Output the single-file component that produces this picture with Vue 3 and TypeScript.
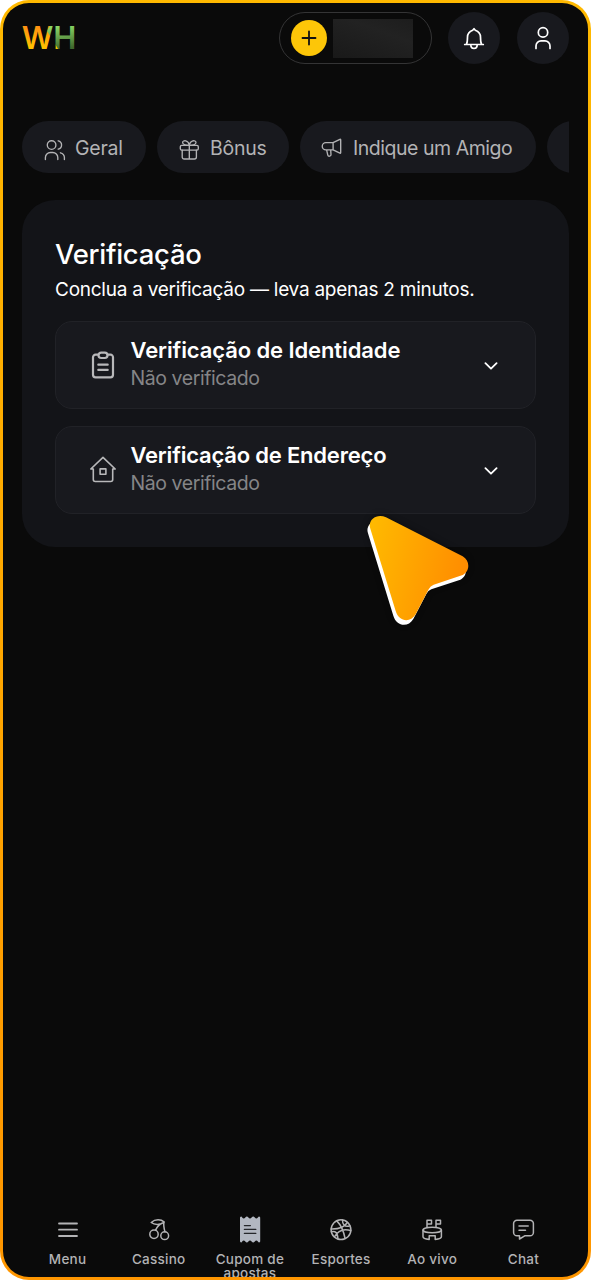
<script setup lang="ts">
interface Chip { id: string; label: string }
interface Check { id: string; title: string; status: string }
interface NavItem { id: string; label: string }

const chips: Chip[] = [
  { id: 'geral', label: 'Geral' },
  { id: 'bonus', label: 'Bônus' },
  { id: 'indique', label: 'Indique um Amigo' },
]
const checks: Check[] = [
  { id: 'identidade', title: 'Verificação de Identidade', status: 'Não verificado' },
  { id: 'endereco', title: 'Verificação de Endereço', status: 'Não verificado' },
]
const nav: NavItem[] = [
  { id: 'menu', label: 'Menu' },
  { id: 'cassino', label: 'Cassino' },
  { id: 'cupom', label: 'Cupom de apostas' },
  { id: 'esportes', label: 'Esportes' },
  { id: 'aovivo', label: 'Ao vivo' },
  { id: 'chat', label: 'Chat' },
]
</script>

<template>
  <div class="frame">
    <div class="screen">
      <header class="header">
        <svg class="logo" width="60" height="44" viewBox="0 0 60 44">
          <defs>
            <linearGradient id="gold" x1="0" y1="0" x2="0" y2="1">
              <stop offset="0.25" stop-color="#ff9212" />
              <stop offset="0.7" stop-color="#ffc000" />
            </linearGradient>
            <linearGradient id="leaf" x1="0" y1="0" x2="0.2" y2="1">
              <stop offset="0.35" stop-color="#8ad765" />
              <stop offset="0.85" stop-color="#3f682e" />
            </linearGradient>
            <pattern id="brand" patternUnits="userSpaceOnUse" width="60" height="44">
              <rect width="60" height="44" fill="url(#leaf)" />
              <path d="M0 0H34L25 15L43 44H0Z" fill="url(#gold)" />
            </pattern>
          </defs>
          <text y="33" class="logo-text" fill="url(#brand)"><tspan x="-0.3">W</tspan><tspan x="31.2">H</tspan></text>
        </svg>
        <div class="actions">
          <div class="balance">
            <span class="plus">
              <svg width="16" height="16" viewBox="0 0 16 16"><path d="M8 1.5v13M1.5 8h13" /></svg>
            </span>
            <span class="hidden-amount"></span>
          </div>
          <button class="round" type="button" aria-label="Notificações">
            <svg width="24" height="26" viewBox="0 0 24 26">
              <path d="M2.7 19.5h18.6M4.5 19.2c.9-1.8 1-3.300 1-7.200 0-3.800 2.400-5.700 5.200-6.800L12 3.700l1.300 1.500c2.800 1.100 5.200 3 5.200 6.800 0 3.900.1 5.400 1 7.200M8.800 19.700c0 4.900 6.400 4.900 6.400 0" />
            </svg>
          </button>
          <button class="round" type="button" aria-label="Perfil">
            <svg width="24" height="26" viewBox="0 0 24 26">
              <circle cx="12" cy="7.400" r="4.700" />
              <path d="M5 23.500v-2.600a5 5 0 0 1 5-5h4a5 5 0 0 1 5 5v2.600" />
            </svg>
          </button>
        </div>
      </header>

      <nav class="chips">
        <button v-for="chip in chips" :key="chip.id" type="button" class="chip" :class="chip.id">
          <svg width="22" height="22" viewBox="0 0 22 22">
            <template v-if="chip.id === 'geral'">
              <circle cx="7.6" cy="6" r="4.3" />
              <path d="M1.400 20.500v-2a5 5 0 0 1 5-5h2.400a5 5 0 0 1 5 5v2M14.200 1.800a4.300 4.300 0 0 1 0 8.400M16.400 13.800c2.600.7 4 2.300 4 4.800v1.900" />
            </template>
            <template v-else-if="chip.id === 'bonus'">
              <rect x="1.300" y="6.300" width="18" height="4.800" rx="1.400" />
              <path d="M3.200 11.100v6.900a2 2 0 0 0 2 2h10.200a2 2 0 0 0 2-2v-6.900M10.300 6.300V20M10.300 6.300C7.500 6.500 3.400 5.800 3.600 3.400 3.900.8 9.600.9 10.300 6.300M10.300 6.300c2.800.2 6.900-.5 6.700-2.900-.3-2.600-6-2.500-6.700 2.900" />
            </template>
            <template v-else>
              <path d="M12.100 4.600H4.900a3.600 3.600 0 0 0 0 7.300h7.200ZM12.100 4.600l6.800-3.300q.8-.3.800.6v12.700q0 .9-.8.600l-6.800-3.300M5.600 11.900l1.200 5.200c.4 1.700 3.400 1.400 3.200-.5l-.3-4.700" />
            </template>
          </svg>
          <span>{{ chip.label }}</span>
        </button>
        <span class="chip next"></span>
      </nav>

      <main class="card">
        <h1>Verificação</h1>
        <p class="lead">Conclua a verificação — leva apenas 2 minutos.</p>
        <section v-for="check in checks" :key="check.id" class="check" :class="check.id">
          <svg class="check-icon" width="28" height="30" viewBox="0 0 28 30">
            <template v-if="check.id === 'identidade'">
              <path stroke-width="2.200" d="M9.300 4.700H6.500a2.500 2.500 0 0 0-2.500 2.500v17.600a2.500 2.500 0 0 0 2.500 2.500h15a2.500 2.500 0 0 0 2.500-2.500V7.200a2.500 2.500 0 0 0-2.500-2.500h-2.800M9.300 14.700h9.400M9.300 19.900h9.400" />
              <rect x="9.500" y="2.600" width="9" height="5.400" rx="2.700" stroke-width="2.200" />
            </template>
            <template v-else>
              <path stroke-width="1.600" d="M4.300 14H1.800L14 2.300 26.200 14h-2.500v10.500a2 2 0 0 1-2 2H6.300a2 2 0 0 1-2-2Z" />
              <rect x="11.100" y="13.900" width="5.800" height="5.400" stroke-width="1.600" />
            </template>
          </svg>
          <div class="check-copy">
            <h2>{{ check.title }}</h2>
            <p>{{ check.status }}</p>
          </div>
          <svg class="chevron" width="16" height="10" viewBox="0 0 16 10"><path d="M2.400 2.200l5.600 5.500 5.600-5.500" /></svg>
        </section>
      </main>

      <footer class="tabbar">
        <a v-for="item in nav" :key="item.id" class="tab" :class="item.id">
          <svg width="26" height="28" viewBox="0 0 26 28">
            <path v-if="item.id === 'menu'" d="M4 7.500h18M4 13.700h18M4 20h18" stroke-width="1.800" />
            <template v-else-if="item.id === 'cassino'">
              <circle cx="8" cy="18.200" r="4.200" />
              <circle cx="18.700" cy="19.700" r="3.900" />
              <path d="M5.200 6.500C9.400 2.800 15 3.200 18.300 6.100 14.500 9.200 8.500 9.200 5.200 6.500ZM18 6.200c-3.800 1.500-7 4.500-8.300 7.700M18 6.200c-.8 3.500.2 7 1 9.700" />
            </template>
            <template v-else-if="item.id === 'cupom'">
              <path class="solid" d="M3 1.500q1.200-2 2.200 0q1.500 2.200 3.100 0q1.600-2 3.100 0q1.600 2.200 3.200 0q1.600-2 3.200 0q1.500 2.200 3.100 0q1.200-2 2.300 0v24q-1.100 2-2.300 0q-1.600-2.200-3.100 0q-1.600 2-3.200 0q-1.600-2.200-3.200 0q-1.500 2-3.100 0q-1.600-2.200-3.100 0q-1 2-2.200 0Z" />
              <path class="ink" d="M7.400 9.600h6M7.400 13.400h11.400M7.400 17.400h11.400" />
            </template>
            <template v-else-if="item.id === 'esportes'">
              <circle cx="13" cy="13.700" r="9.900" />
              <path d="M8.800 4.900c4.400 4.400 6.900 10.500 8.300 17.600M3.200 13c8 .2 13.300-2 16.200-6.500M6.400 20.900c3.300-6 9.300-8.500 16.400-6.400M14.500 4c-.2 4 2.300 7.700 7.300 5.700M3.400 15.700c4.100-.8 6.300.8 6.500 7.300" />
            </template>
            <template v-else-if="item.id === 'aovivo'">
              <ellipse cx="13.200" cy="14" rx="9.200" ry="2.800" />
              <path d="M4 14v6.800q0 2 6.200 2.700v-3.800h6v3.800q6.200-.7 6.200-2.700V14M8 11.300V4.300h4.500v3.600H8M17 11.300V4.300h4.500v3.600H17" />
            </template>
            <template v-else>
              <path d="M7 4.200h13a3.400 3.400 0 0 1 3.400 3.400v8.800a3.400 3.400 0 0 1-3.400 3.400h-5.300L9.500 23v-3.200H7a3.400 3.400 0 0 1-3.400-3.400V7.600A3.400 3.400 0 0 1 7 4.200ZM9 10h9.200M9 14.200h6.500" />
            </template>
          </svg>
          <span>{{ item.label }}</span>
        </a>
      </footer>

      <svg class="cursor" width="110" height="117" viewBox="69 216 330 351" aria-hidden="true">
        <defs>
          <linearGradient id="pointer" x1="0" y1="0.2" x2="1" y2="0.45">
            <stop offset="0" stop-color="#ffb900" />
            <stop offset="1" stop-color="#ff8c00" />
          </linearGradient>
        </defs>
        <path transform="translate(-7 14)" fill="#fff" d="M91 266C82 240 110 219 138 232L368 349C392 363 389 395 368 405L281 434Q271 438 266 448L227 523C211 550 176 545 167 513Z" />
        <path fill="url(#pointer)" d="M91 266C82 240 110 219 138 232L368 349C392 363 389 395 368 405L281 434Q271 438 266 448L227 523C211 550 176 545 167 513Z" />
      </svg>
    </div>
  </div>
</template>

<style>
body { background: #fff; }
</style>

<style scoped>
* { box-sizing: border-box; }
.frame {
  width: 591px;
  height: 1280px;
  padding: 3px;
  border-radius: 29px;
  background: linear-gradient(#ffb900, #ff9600);
  font-family: Inter, "Noto Sans", sans-serif;
}
.screen {
  position: relative;
  display: flex;
  flex-direction: column;
  height: 1274px;
  padding: 9px 19px 0;
  border-radius: 26px;
  background: #0a0a0a;
  overflow: hidden;
}
svg { flex: none; fill: none; stroke-linecap: round; stroke-linejoin: round; }
button { border: 0; padding: 0; font: inherit; }
h1, h2, p { margin: 0; white-space: nowrap; }
.header { display: flex; justify-content: space-between; height: 52px; }
.logo { margin-top: 4px; overflow: visible; }
.logo-text { font-size: 31px; font-weight: 600; }
.actions { display: flex; gap: 17px; }
.balance {
  display: flex;
  align-items: center;
  gap: 6px;
  width: 153px;
  margin-right: -1px;
  padding-left: 11px;
  border: 1px solid #343435;
  border-radius: 26px;
}
.plus {
  display: grid;
  place-items: center;
  width: 36px;
  height: 36px;
  border-radius: 50%;
  background: #fdc608;
}
.plus svg { stroke: #111; stroke-width: 1.8; }
.hidden-amount { width: 80px; height: 39px; background: linear-gradient(20deg, #191919, #222 65%, #1d1d1d); }
.round {
  display: grid;
  place-items: center;
  width: 52px;
  height: 52px;
  border-radius: 50%;
  background: #18191e;
}
.round svg { stroke: #fff; stroke-width: 1.7; }
.chips { display: flex; gap: 11px; height: 52px; margin-top: 57px; overflow: hidden; }
.chip {
  display: flex;
  flex: none;
  align-items: center;
  gap: 9px;
  height: 52px;
  padding-left: 22px;
  border-radius: 26px;
  background: #18191e;
  color: #b3b3b5;
  font-size: 19.500px;
  letter-spacing: -0.25px;
  white-space: nowrap;
}
.chip svg { margin-top: 6px; stroke: #b3b3b5; stroke-width: 1.350; }
.chip span { margin-top: 2px; }
.geral { width: 124px; }
.bonus { width: 132px; }
.indique { width: 236px; padding-left: 21px; gap: 10px; letter-spacing: -0.470px; }
.indique svg { margin-top: 4px; }
.next { width: 130px; }
.card {
  height: 347px;
  margin-top: 27px;
  padding: 38px 33px 0;
  border-radius: 33px;
  background: #131418;
  color: #fff;
}
h1 { font-size: 27.500px; line-height: 32px; font-weight: 500; letter-spacing: -0.280px; }
.lead { margin-top: 10px; font-size: 19px; line-height: 20px; letter-spacing: -0.250px; }
.check {
  display: flex;
  align-items: center;
  height: 88px;
  margin-top: 17px;
  padding: 0 36px 0 33px;
  border: 1px solid #212227;
  border-radius: 17px;
  background: #18191e;
}
.lead + .check { margin-top: 21px; }
.check-icon { stroke: #b8b8ba; }
.check-copy { flex: 1; margin: -1px 0 0 13.500px; }
h2 { font-size: 22px; line-height: 28px; font-weight: 600; letter-spacing: -0.100px; }
.endereco h2 { letter-spacing: -0.200px; }
.check-copy p { color: #858587; font-size: 19.500px; line-height: 29px; letter-spacing: -0.430px; }
.chevron { margin-top: 1px; stroke: #fff; stroke-width: 1.800; }
.tabbar { display: grid; grid-template-columns: repeat(6, 1fr); margin-top: auto; height: 61px; }
.tab {
  display: flex;
  flex-direction: column;
  align-items: center;
  color: #b3b3b5;
  font-size: 13.500px;
  line-height: 14px;
  font-weight: 500;
  letter-spacing: 0.250px;
  text-align: center;
}
.tab svg { stroke: #b3b3b5; stroke-width: 1.500; }
.tab span { margin-top: 8px; }
.tab .solid { fill: #b2b7c1; stroke: none; }
.tab .ink { stroke: #25272b; stroke-width: 1.300; }
.cursor { position: absolute; left: 360px; top: 509px; filter: drop-shadow(0 -1px 3px rgb(0 0 0 / 35%)); }
</style>
